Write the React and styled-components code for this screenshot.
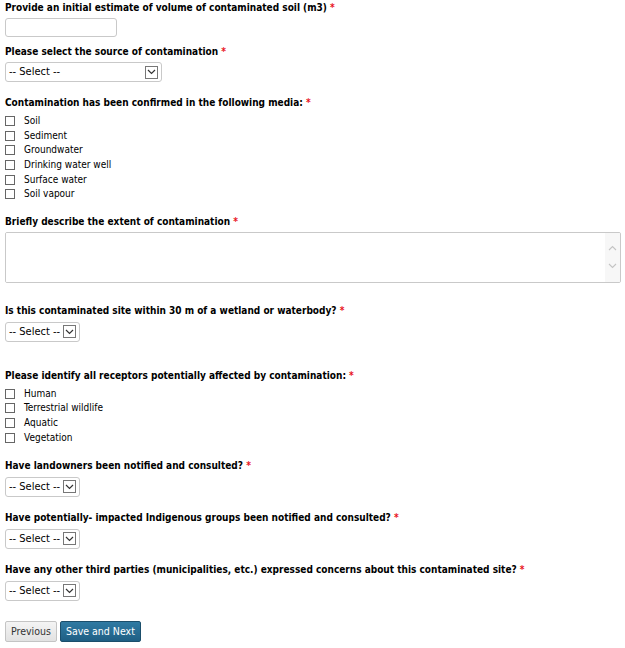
import React from "react";
import styled, { createGlobalStyle } from "styled-components";

const GlobalStyle = createGlobalStyle`
  html, body {
    margin: 0;
    padding: 0;
    background: #fff;
  }
  body {
    font-family: "DejaVu Sans Condensed", "DejaVu Sans", Tahoma, sans-serif;
    font-size: 10px;
    color: #000;
  }
`;

const media = [
  "Soil",
  "Sediment",
  "Groundwater",
  "Drinking water well",
  "Surface water",
  "Soil vapour",
];

const receptors = ["Human", "Terrestrial wildlife", "Aquatic", "Vegetation"];

function Chevron() {
  return (
    <svg width="9" height="6" viewBox="0 0 9 6">
      <path d="M1 1 L4.5 4.5 L8 1" fill="none" stroke="#333" strokeWidth="1.2" />
    </svg>
  );
}

function SelectField({ wide, gap = 4 }) {
  return (
    <SelectBox wide={wide} gap={gap}>
      <SelectText>-- Select --</SelectText>
      <ArrowBox>
        <Chevron />
      </ArrowBox>
    </SelectBox>
  );
}

function CheckList({ items, gap }) {
  return (
    <List gap={gap}>
      {items.map((item) => (
        <CheckRow key={item}>
          <Box />
          <span>{item}</span>
        </CheckRow>
      ))}
    </List>
  );
}

function Question({ children, gap, required = true }) {
  return (
    <Label gap={gap}>
      {children}
      {required && <Star> *</Star>}
    </Label>
  );
}

function App() {
  return (
    <>
      <GlobalStyle />
      <Form>
        <Question gap={1}>
          Provide an initial estimate of volume of contaminated soil (m3)
        </Question>
        <TextInput />

        <Question gap={8}>Please select the source of contamination</Question>
        <SelectField wide gap={3} />

        <Question gap={14}>
          Contamination has been confirmed in the following media:
        </Question>
        <CheckList items={media} gap={4} />

        <Question gap={13}>Briefly describe the extent of contamination</Question>
        <AreaWrap>
          <Area />
          <ScrollTrack>
            <svg width="9" height="6" viewBox="0 0 9 6">
              <path d="M1 5 L4.5 1.5 L8 5" fill="none" stroke="#c4c4c4" strokeWidth="1.1" />
            </svg>
            <svg width="9" height="6" viewBox="0 0 9 6">
              <path d="M1 1 L4.5 4.5 L8 1" fill="none" stroke="#c4c4c4" strokeWidth="1.1" />
            </svg>
          </ScrollTrack>
        </AreaWrap>

        <Question gap={21}>
          Is this contaminated site within 30 m of a wetland or waterbody?
        </Question>
        <SelectField />

        <Question gap={27}>
          Please identify all receptors potentially affected by contamination:
        </Question>
        <CheckList items={receptors} gap={4} />

        <Question gap={14}>Have landowners been notified and consulted?</Question>
        <SelectField />

        <Question gap={14}>
          Have potentially- impacted Indigenous groups been notified and
          consulted?
        </Question>
        <SelectField />

        <Question gap={14}>
          Have any other third parties (municipalities, etc.) expressed concerns
          about this contaminated site?
        </Question>
        <SelectField />

        <Buttons>
          <Button>Previous</Button>
          <Button primary>Save and Next</Button>
        </Buttons>
      </Form>
    </>
  );
}

const Form = styled.form`
  display: flex;
  flex-direction: column;
  align-items: flex-start;
  padding: 0 5px;
`;

const Label = styled.label`
  display: block;
  font-weight: bold;
  line-height: 14px;
  margin-top: ${({ gap }) => gap}px;
`;

const Star = styled.span`
  color: #e8141b;
`;

const TextInput = styled.input`
  box-sizing: border-box;
  width: 112px;
  height: 19px;
  margin: 3px 0 0;
  border: 1px solid #c9c9c9;
  border-radius: 3px;
  padding: 0 4px;
  font: inherit;
`;

const SelectBox = styled.div`
  box-sizing: border-box;
  display: flex;
  align-items: center;
  justify-content: space-between;
  width: ${({ wide }) => (wide ? "157px" : "75px")};
  height: 20px;
  margin-top: ${({ gap }) => gap}px;
  padding: 0 3px;
  border: 1px solid #c9c9c9;
  border-radius: 3px;
  background: #fff;
`;

const SelectText = styled.span`
  white-space: nowrap;
  line-height: 14px;
  font-size: 11px;
`;

const ArrowBox = styled.span`
  box-sizing: border-box;
  display: flex;
  align-items: center;
  justify-content: center;
  width: 13px;
  height: 13px;
  border: 1px solid #777;
  background: #fff;
`;

const List = styled.div`
  display: flex;
  flex-direction: column;
  margin-top: ${({ gap }) => gap}px;
`;

const CheckRow = styled.div`
  display: flex;
  align-items: center;
  height: 14.6px;
  line-height: 14px;
`;

const Box = styled.span`
  box-sizing: border-box;
  width: 10px;
  height: 10px;
  margin-right: 9px;
  border: 1px solid #666;
  background: #fff;
`;

const AreaWrap = styled.div`
  box-sizing: border-box;
  display: flex;
  width: 616px;
  height: 51px;
  margin-top: 3px;
  border: 1px solid #c9c9c9;
  border-radius: 2px;
  overflow: hidden;
`;

const Area = styled.textarea`
  flex: 1;
  border: none;
  resize: none;
  outline: none;
  font: inherit;
`;

const ScrollTrack = styled.div`
  width: 15px;
  background: #f7f7f7;
  display: flex;
  flex-direction: column;
  align-items: center;
  justify-content: center;
  gap: 12px;
`;

const Buttons = styled.div`
  display: flex;
  gap: 3px;
  margin-top: 20px;
`;

const Button = styled.button`
  box-sizing: border-box;
  height: 21px;
  font: inherit;
  font-size: 10.5px;
  line-height: 14px;
  border-radius: 2px;
  border: 1px solid ${({ primary }) => (primary ? "#1b4e6b" : "#c4c4c4")};
  color: ${({ primary }) => (primary ? "#fff" : "#333")};
  background: ${({ primary }) =>
    primary
      ? "linear-gradient(#2f7aa3, #1f5f84)"
      : "linear-gradient(#f4f4f4, #e2e2e2)"};
  padding: 0 5px;
`;

export default App;
